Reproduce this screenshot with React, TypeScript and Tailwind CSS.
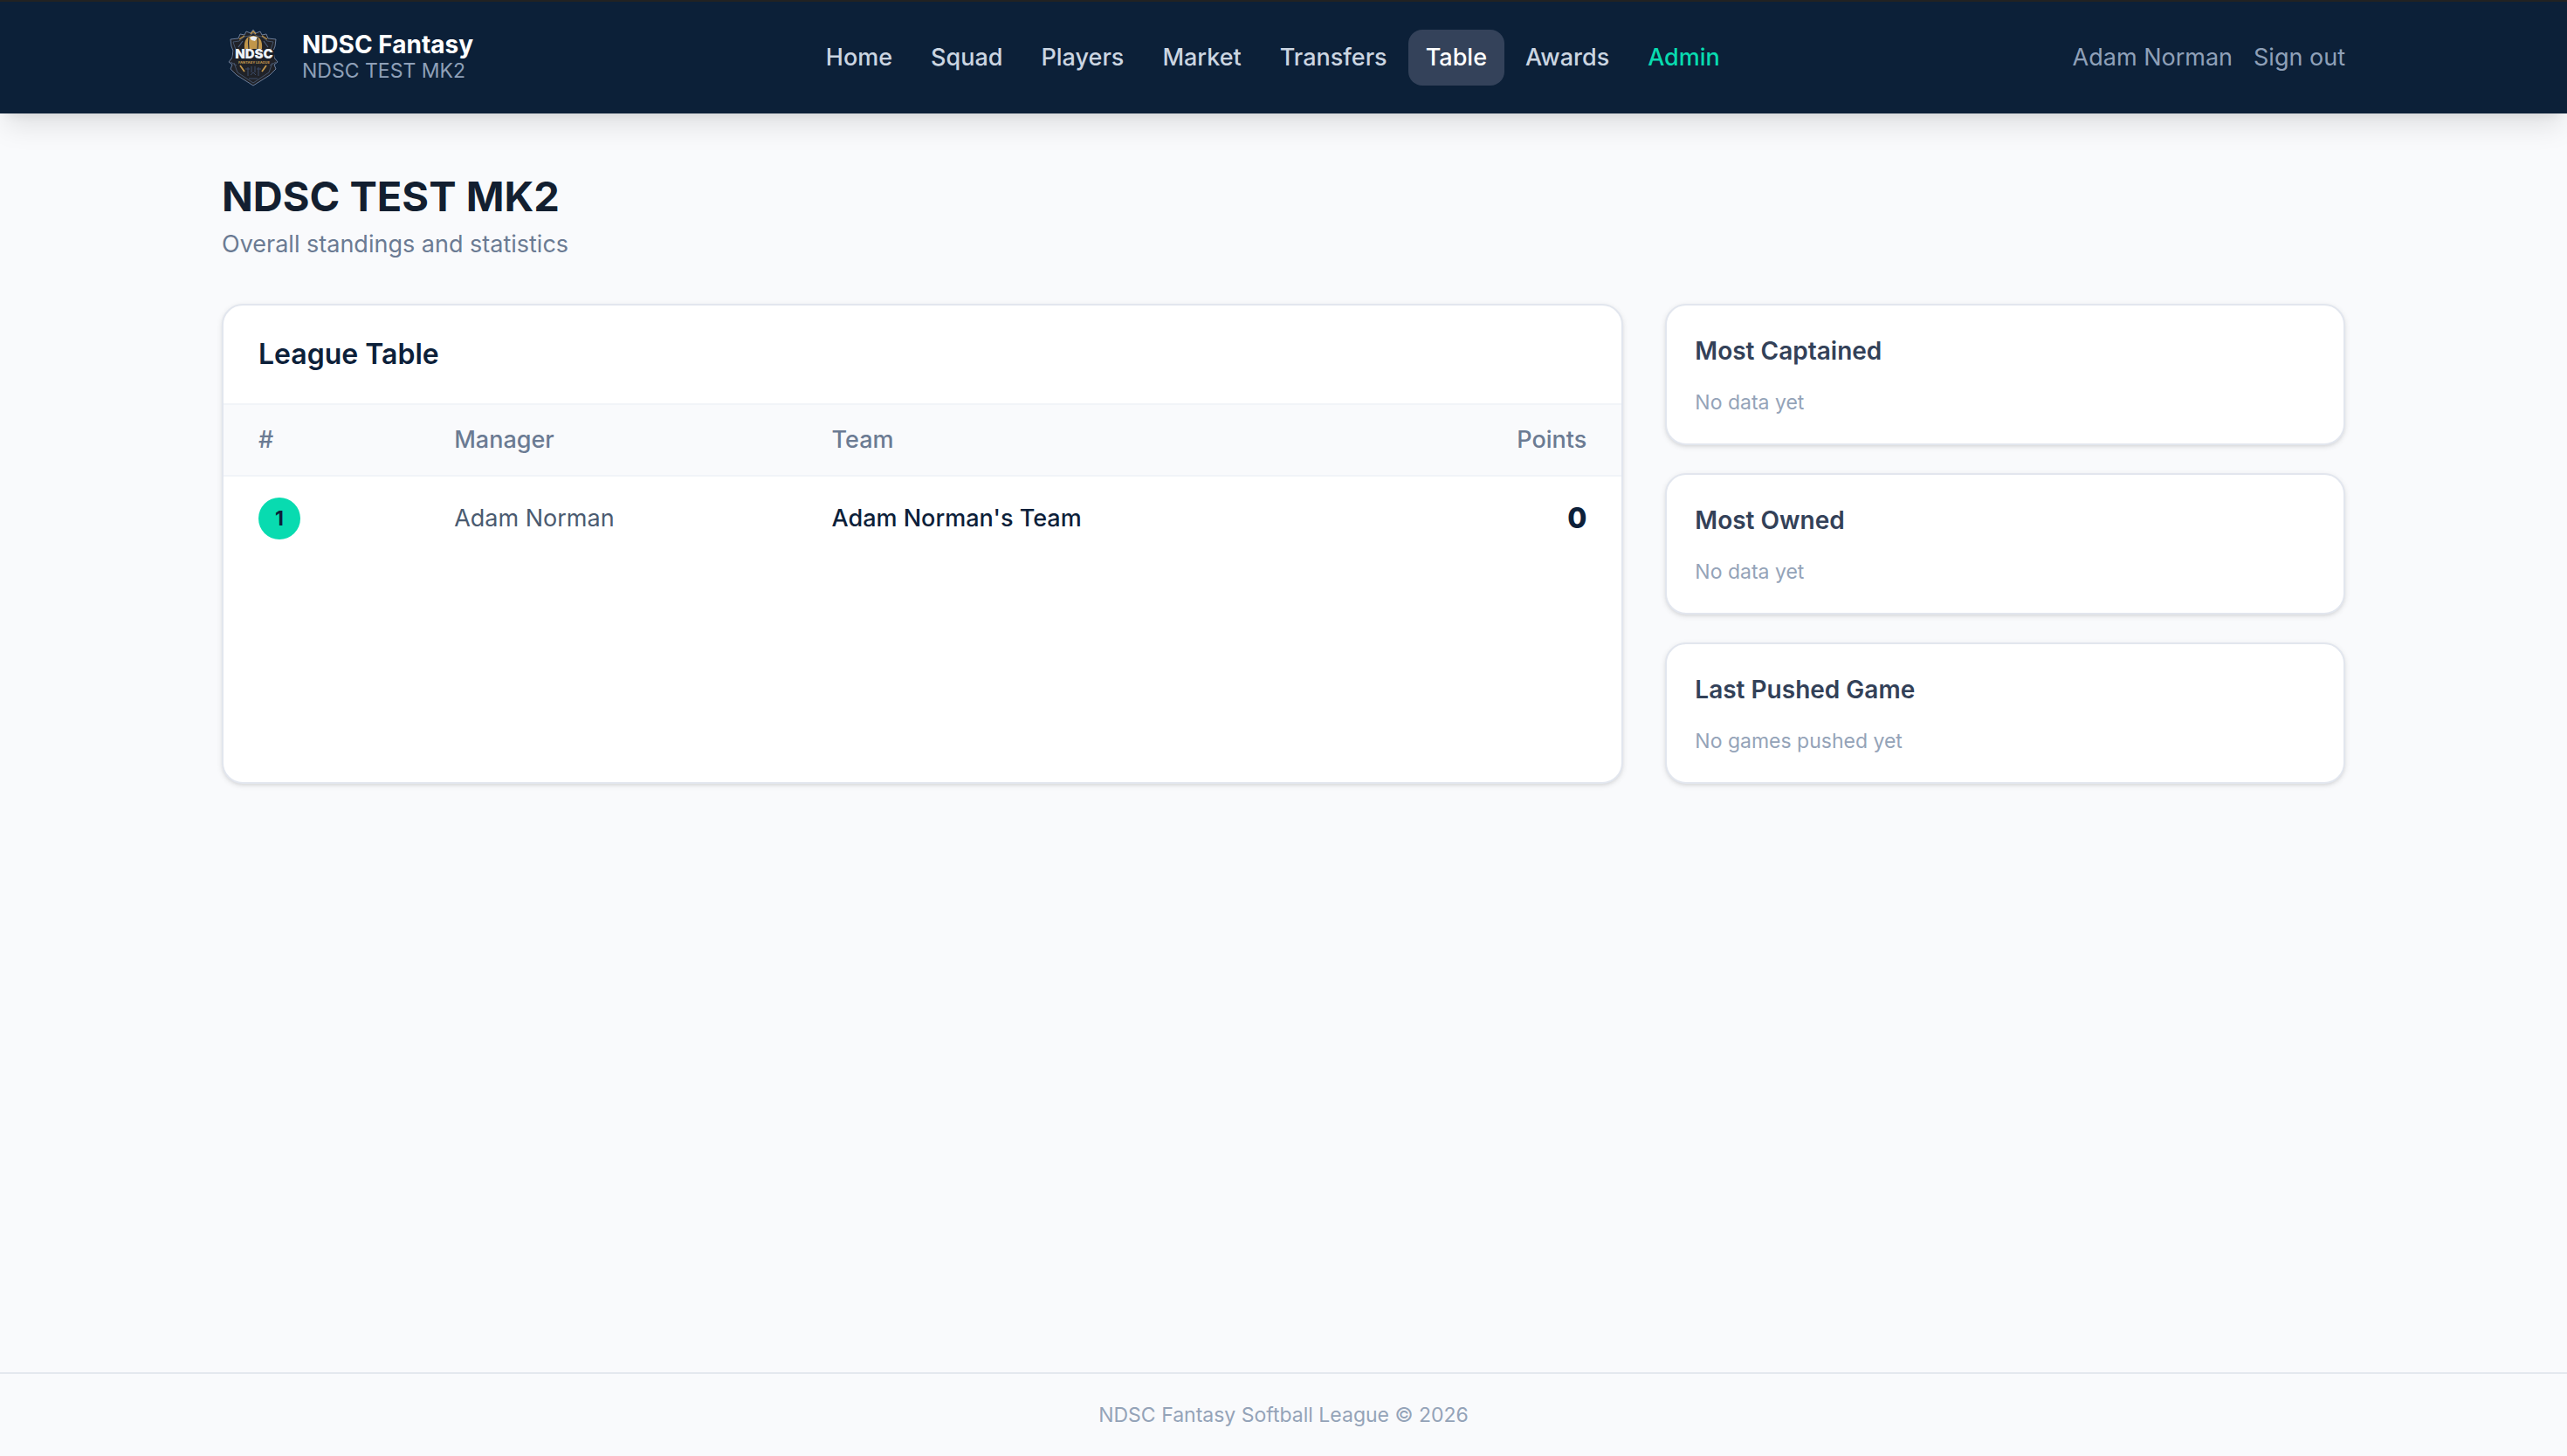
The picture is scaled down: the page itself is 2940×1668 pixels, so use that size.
const navItems = ["Home", "Squad", "Players", "Market", "Transfers", "Table", "Awards"];

const stats = [
  { title: "Most Captained", empty: "No data yet" },
  { title: "Most Owned", empty: "No data yet" },
  { title: "Last Pushed Game", empty: "No games pushed yet" },
];

const standings = [{ rank: 1, manager: "Adam Norman", team: "Adam Norman's Team", points: 0 }];

function Logo() {
  return (
    <svg viewBox="0 0 72 72" className="size-18 shrink-0" role="img" aria-label="NDSC Fantasy League">
      <path
        d="M36 4 39 8 44 6 46 10 51 9 53 14 62 15 61 23 59 28 60 36 64 41 60 44 62 49 55 56 36 68 17 56 10 49 12 44 8 41 12 36 13 28 11 23 10 15 19 14 21 9 26 10 28 6 33 8Z"
        fill="#202228"
        stroke="#6b7d9a"
        strokeWidth="1"
        strokeLinejoin="round"
      />
      <path
        d="M36 8 40 11 46 12 52 17 59 18 56 27M36 8 32 11 26 12 20 17 13 18 16 27M14 42 18 53 36 65 54 53 58 42M10 41 17 45M62 41 55 45"
        fill="none"
        stroke="#4d5f7c"
        strokeWidth="0.8"
      />
      <path d="M20 15 26 11M52 15 46 11M33 9 36 6 39 9" fill="none" stroke="#c1964a" strokeWidth="1.3" />
      <path d="M26 26C25 16 29 11 36 11S47 16 46 26Z" fill="#c1964a" />
      <path d="M32 13Q36 10 41 13L38 17 34 16Z" fill="#e8edf4" />
      <path d="M31 13Q30 19 31 26M41 13Q42 19 41 26" fill="none" stroke="#252833" strokeWidth="1.2" />
      <path d="M19 24 24 17M53 24 48 17" stroke="#4d5f7c" strokeWidth="1.2" />
      <path d="M21 45 26 52M51 45 46 52" stroke="#c1964a" strokeWidth="1.8" />
      <path
        d="M30 47V57M34 46V53M38 46V53M42 47V57M27 49H32M40 49H45M31 60H41M33 56 36 53 39 56"
        fill="none"
        stroke="#3c4d6b"
        strokeWidth="1"
      />
      <path d="M14 26 60 27 60 38 12 38Z" fill="#1c1f27" />
      <text x="37" y="37" textAnchor="middle" fill="#eef2f8" className="font-['Inter'] text-[15px] font-black">
        NDSC
      </text>
      <text x="37" y="43" textAnchor="middle" fill="#b98f4a" className="font-['Inter'] text-[4px] font-extrabold">
        FANTASY LEAGUE
      </text>
    </svg>
  );
}

export default function App() {
  return (
    <div className="flex min-h-screen flex-col bg-[#f9fafc] font-['Inter',sans-serif] text-[28px] leading-10 text-[#0c2039]">
      <header className="border-t-2 border-[#222222] bg-[#0c2038] shadow-[0_20px_30px_-6px_rgba(0,0,0,0.1),0_8px_12px_-8px_rgba(0,0,0,0.1)]">
        <div className="mx-auto flex h-32 max-w-[2560px] items-center justify-between px-16">
          <a href="#" className="flex items-center gap-5">
            <Logo />
            <span className="flex flex-col">
              <span className="leading-[30px] font-bold text-white">NDSC Fantasy</span>
              <span className="text-[23px] leading-[30px] text-[#8fa0b8]">NDSC TEST MK2</span>
            </span>
          </a>
          <nav className="flex items-center gap-1 text-[27px] font-medium">
            {navItems.map((item) => (
              <a
                key={item}
                href="#"
                aria-current={item === "Table" ? "page" : undefined}
                className={
                  item === "Table"
                    ? "rounded-2xl bg-[#34425a] px-5 py-3 text-white"
                    : "rounded-2xl px-5 py-3 text-[#cbd5e1]"
                }
              >
                {item}
              </a>
            ))}
            <a href="#" className="rounded-2xl px-5 py-3 text-[#08dbb0]">
              Admin
            </a>
          </nav>
          <div className="flex items-center gap-6 text-[27px] text-[#8fa0b8]">
            <span>Adam Norman</span>
            <button type="button">Sign out</button>
          </div>
        </div>
      </header>

      <main className="mx-auto w-full max-w-[2560px] flex-1 px-16 py-16">
        <h1 className="text-[47px] leading-[62px] font-bold text-[#131f30]">NDSC TEST MK2</h1>
        <p className="mt-1 text-[27px] text-[#6b7b93]">Overall standings and statistics</p>

        <div className="mt-12 grid grid-cols-3 gap-12">
          <section className="col-span-2 overflow-hidden rounded-3xl border-2 border-[#e2e6ee] bg-white shadow-[0_2px_6px_rgba(0,0,0,0.1),0_2px_4px_-2px_rgba(0,0,0,0.1)]">
            <h2 className="border-b-2 border-[#f1f4f8] px-10 py-8 text-[32px] leading-12 font-semibold">League Table</h2>
            <table className="w-full table-fixed text-left text-[27px]">
              <thead className="border-b-2 border-[#f1f4f8] bg-[#f9fafc] text-[#6b7b93]">
                <tr>
                  <th className="w-[14%] px-10 py-5 font-medium">#</th>
                  <th className="w-[27%] px-10 py-5 font-medium">Manager</th>
                  <th className="px-10 py-5 font-medium">Team</th>
                  <th className="w-[20%] px-10 py-5 text-right font-medium">Points</th>
                </tr>
              </thead>
              <tbody>
                {standings.map((row) => (
                  <tr key={row.rank}>
                    <td className="px-10 py-6">
                      <span className="flex size-12 items-center justify-center rounded-full bg-[#08dbb0] text-[23px] font-bold">
                        {row.rank}
                      </span>
                    </td>
                    <td className="px-10 py-6 text-[#4b5b70]">{row.manager}</td>
                    <td className="px-10 py-6 font-medium">{row.team}</td>
                    <td className="px-10 py-6 text-right text-[32px] font-extrabold">{row.points}</td>
                  </tr>
                ))}
              </tbody>
            </table>
          </section>

          <aside className="flex flex-col gap-8">
            {stats.map((stat) => (
              <section
                key={stat.title}
                className="rounded-3xl border-2 border-[#e2e6ee] bg-white p-8 shadow-[0_2px_6px_rgba(0,0,0,0.1),0_2px_4px_-2px_rgba(0,0,0,0.1)]"
              >
                <h3 className="font-semibold text-[#334158]">{stat.title}</h3>
                <p className="mt-6 text-[23px] leading-[30px] text-[#94a3b8]">{stat.empty}</p>
              </section>
            ))}
          </aside>
        </div>
      </main>

      <footer className="border-t-2 border-[#e4e8ee] py-8 text-center text-[23px] leading-[30px] text-[#94a3b8]">
        NDSC Fantasy Softball League © 2026
      </footer>
    </div>
  );
}
